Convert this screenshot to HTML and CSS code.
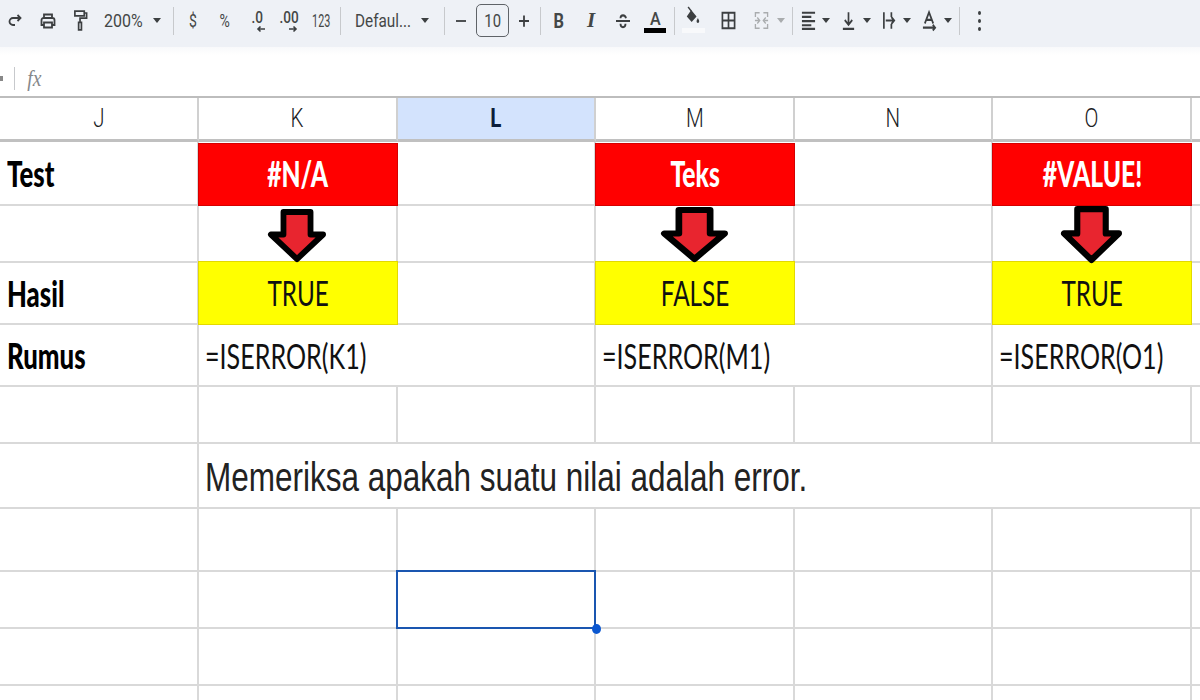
FILE: index.html
```html
<!DOCTYPE html>
<html lang="id">
<head>
<meta charset="utf-8">
<title>ISERROR</title>
<link rel="stylesheet" href="styles.css">
</head>
<body>
<div class="toolbar">
  <div class="tool w-redo"><svg class="ico" viewBox="0 0 16 16"><path d="M13 5H6a3.500 3.500 0 0 0 0 7h2M10.500 2 13.500 5 10.500 8"/></svg></div>
  <div class="tool w-print"><svg class="ico" viewBox="0 0 16 16"><path d="M4 5V1.500h8V5M4 12H1.500V7A2 2 0 0 1 3.500 5h9a2 2 0 0 1 2 2v5H12M4 9.500h8v5H4z"/></svg></div>
  <div class="tool w-paint"><svg class="ico ico-tall" viewBox="0 0 16 24"><path d="M2 2h10v5H2zM12 4h2.500v5.500H7.500V14M6 14h3v8H6z"/></svg></div>
  <div class="zoomlevel">200%</div>
  <div class="caret-slot w-zoomcaret"><span class="caret"></span></div>
  <div class="sep s-a"></div>
  <div class="tool w32 txt"><span class="narrow">$</span></div>
  <div class="tool w32 txt"><span class="narrow">%</span></div>
  <div class="tool w32 dec">
    <span class="dec-t">.0</span>
    <svg class="dec-arrow" viewBox="0 0 10 8"><path d="M9 4H2M4.500 1.500 2 4l2.500 2.500"/></svg>
  </div>
  <div class="tool w32 dec">
    <span class="dec-t">.00</span>
    <svg class="dec-arrow" viewBox="0 0 10 8"><path d="M1 4h7M5.500 1.500 8 4 5.500 6.500"/></svg>
  </div>
  <div class="tool w32 txt"><span class="narrower">123</span></div>
  <div class="sep s-b"></div>
  <div class="fontname">Defaul...</div>
  <div class="caret-slot w-fontcaret"><span class="caret"></span></div>
  <div class="sep s-c"></div>
  <div class="tool w-minus"><svg class="ico" viewBox="0 0 16 16"><path d="M3 8h10"/></svg></div>
  <div class="sizebox"><span class="narrow">10</span></div>
  <div class="tool w-plus"><svg class="ico ico-st" viewBox="0 0 16 16" preserveAspectRatio="none"><path d="M3 8h10M8 3v10"/></svg></div>
  <div class="sep s-d"></div>
  <div class="tool w32 fmt bold"><span class="narrow">B</span></div>
  <div class="tool w32 fmt ital">I</div>
  <div class="tool w32"><svg class="ico ico-st" viewBox="0 0 16 16" preserveAspectRatio="none"><path d="M1 8h14M11 5.500C10.500 3.500 9.500 3 8 3S5.500 3.500 5.500 5.500M5.500 10.500C5.500 12.500 6.500 13.500 8 13.500s2.500-1 2.500-3"/></svg></div>
  <div class="tool w32 colora"><span class="colora-t">A</span><span class="colora-bar"></span></div>
  <div class="sep s-e"></div>
  <div class="tool w-fill"><svg class="ico fillicon" viewBox="0 0 18 20" preserveAspectRatio="none"><path class="solid" d="M7 4 2 10.500 7.500 16 13 10.500zM14.500 12c-1 1.700-1.500 2.600-1.500 3.300a1.500 1.700 0 0 0 3 0c0-.7-.5-1.600-1.500-3.300z"/><path class="handle-line" d="M3.500 1 7 5"/></svg><span class="fillbar"></span></div>
  <div class="tool w-border"><svg class="ico ico-st2" viewBox="0 0 16 16" preserveAspectRatio="none"><path d="M1.500 1.500h13v13h-13zM8 1.500v13M1.500 8h13"/></svg></div>
  <div class="tool w-merge"><svg class="ico ico-st2 dim dash" viewBox="0 0 16 16" preserveAspectRatio="none"><path d="M1.500 5V1.500H6M10 1.500h4.500V5M1.500 11v3.500H6M10 14.500h4.500V11M1 8h4M15 8h-4M3.500 5.500 6 8 3.500 10.500M12.500 5.500 10 8l2.500 2.500"/></svg></div>
  <div class="caret-slot w-mergecaret"><span class="caret dimcaret"></span></div>
  <div class="sep s-f"></div>
  <div class="tool w-t t-first"><svg class="ico ico-st2" viewBox="0 0 16 16" preserveAspectRatio="none"><path d="M1 1.500h14M1 5h10M1 8.500h14M1 12h10M1 15h14"/></svg></div>
  <div class="caret-slot w-c"><span class="caret"></span></div>
  <div class="tool w-t"><svg class="ico ico-st2" viewBox="0 0 16 16" preserveAspectRatio="none"><path d="M8 1v10M4 7.500 8 11.500l4-4M2 15h12"/></svg></div>
  <div class="caret-slot w-c"><span class="caret"></span></div>
  <div class="tool w-t"><svg class="ico ico-st2" viewBox="0 0 16 16" preserveAspectRatio="none"><path d="M2 1v14M10 1v4M10 11v4M4 8h9M10 5l3 3-3 3"/></svg></div>
  <div class="caret-slot w-c"><span class="caret"></span></div>
  <div class="tool w-t"><svg class="ico ico-st2" viewBox="0 0 16 16" preserveAspectRatio="none"><path d="M3 10.500 7.500 1 12 10.500M4.500 7.500h6M1 14h13M11.500 11.500 14 14l-2.500 2.500"/></svg></div>
  <div class="caret-slot w-c"><span class="caret"></span></div>
  <div class="sep s-g"></div>
  <div class="dots"><i></i><i></i><i></i></div>
</div>
<div class="formulabar">
  <span class="namecaret"></span>
  <span class="fsep"></span>
  <span class="fx">fx</span>
</div>
<div class="sheet">
  <div class="head"><span class="head-t">J</span></div><div class="head"><span class="head-t">K</span></div><div class="head head-sel"><span class="head-t">L</span></div><div class="head"><span class="head-t">M</span></div><div class="head"><span class="head-t">N</span></div><div class="head"><span class="head-t">O</span></div><div class="head end"></div>

  <div class="c r1 label"><span class="t-label">Test</span></div><div class="c r1 red"><span class="t-red">#N/A</span></div><div class="c r1"></div><div class="c r1 red"><span class="t-red">Teks</span></div><div class="c r1"></div><div class="c r1 red"><span class="t-red">#VALUE!</span></div><div class="c r1 end"></div>

  <div class="c r2"></div>
  <div class="c r2 center"><svg class="arrow a-k" viewBox="0 0 60 54" preserveAspectRatio="none"><path d="M16 3H44V26H57L30 51 3 26H16Z"/></svg></div>
  <div class="c r2"></div>
  <div class="c r2 center"><svg class="arrow a-m" viewBox="0 0 60 54" preserveAspectRatio="none"><path d="M16 3H44V26H57L30 51 3 26H16Z"/></svg></div>
  <div class="c r2"></div>
  <div class="c r2 center"><svg class="arrow a-o" viewBox="0 0 60 54" preserveAspectRatio="none"><path d="M16 3H44V26H57L30 51 3 26H16Z"/></svg></div>
  <div class="c r2 end"></div>

  <div class="c r3 label"><span class="t-label">Hasil</span></div><div class="c r3 yellow"><span class="t-body">TRUE</span></div><div class="c r3"></div><div class="c r3 yellow"><span class="t-body">FALSE</span></div><div class="c r3"></div><div class="c r3 yellow"><span class="t-body">TRUE</span></div><div class="c r3 end"></div>

  <div class="c r4 label"><span class="t-label">Rumus</span></div><div class="c r4 span2 formula"><span class="t-body">=ISERROR(K1)</span></div><div class="c r4 span2 formula"><span class="t-body">=ISERROR(M1)</span></div><div class="c r4 span2 formula end"><span class="t-body">=ISERROR(O1)</span></div>

  <div class="c r5"></div><div class="c r5"></div><div class="c r5"></div><div class="c r5"></div><div class="c r5"></div><div class="c r5"></div><div class="c r5 end"></div>

  <div class="c r6"></div><div class="c r6 spanall note"><span class="t-note">Memeriksa apakah suatu nilai adalah error.</span></div>

  <div class="c r7"></div><div class="c r7"></div><div class="c r7"></div><div class="c r7"></div><div class="c r7"></div><div class="c r7"></div><div class="c r7 end"></div>

  <div class="c r8"></div><div class="c r8"></div><div class="c r8 selected"><span class="selbox"></span><span class="handle"></span></div><div class="c r8"></div><div class="c r8"></div><div class="c r8"></div><div class="c r8 end"></div>

  <div class="c r9"></div><div class="c r9"></div><div class="c r9"></div><div class="c r9"></div><div class="c r9"></div><div class="c r9"></div><div class="c r9 end"></div>

  <div class="c r10"></div><div class="c r10"></div><div class="c r10"></div><div class="c r10"></div><div class="c r10"></div><div class="c r10"></div><div class="c r10 end"></div>
</div>
</body>
</html>
```
FILE: styles.css
```css
* { box-sizing: border-box; }
html, body { margin: 0; padding: 0; }
body { width: 1200px; height: 700px; overflow: hidden; background: #fff; font-family: "Roboto", "Liberation Sans", sans-serif; color: #444746; }

/* toolbar */
.toolbar { height: 47px; background: #eef1f6; display: flex; align-items: center; padding-bottom: 6px; }
.tool { height: 32px; flex: none; display: flex; align-items: center; justify-content: center; position: relative; }
.ico { width: 16px; height: 16px; fill: none; stroke: #3c3f41; stroke-width: 1.8; overflow: visible; flex: none; }
.ico-tall { width: 15px; height: 23px; }
.ico-st { height: 18px; }
.ico-st2 { width: 15px; height: 19px; }
.dim { stroke: #a9acae; }
.dash { stroke-width: 1.4; }
.narrow { display: inline-block; transform: scaleX(.78); }
.narrower { display: inline-block; transform: scaleX(.6); }
.w-redo { width: 30px; }
.w-print { width: 36px; }
.w-paint { width: 28px; }
.w32 { width: 32px; }
.zoomlevel { width: 54px; flex: none; padding-left: 10px; font-size: 19px; transform: scaleX(.84); transform-origin: 10px 50%; }
.caret-slot { flex: none; height: 32px; display: flex; align-items: center; justify-content: center; }
.caret { flex: none; width: 0; height: 0; border-left: 4.5px solid transparent; border-right: 4.5px solid transparent; border-top: 5px solid #3c3f41; }
.dimcaret { border-top-color: #a9acae; }
.w-zoomcaret { width: 18px; }
.sep { flex: none; width: 1px; height: 28px; background: #c7c9cc; }
.s-a { margin: 0 3px 0 7px; }
.s-b { margin: 0 0 0 3px; }
.s-c { margin: 0 0 0 3px; }
.s-d { margin: 0 2px 0 2px; }
.s-e { margin: 0 0 0 3px; }
.s-f { margin: 0 0 0 7px; }
.s-g { margin: 0 0 0 6px; }
.txt { font-size: 18px; }
.dec { flex-direction: column; align-items: center; justify-content: center; gap: 0; }
.dec-t { font-size: 17px; line-height: 16px; font-weight: 500; transform: scaleX(.8); }
.dec-arrow { width: 10px; height: 8px; fill: none; stroke: #3c3f41; stroke-width: 1.6; margin-left: 8px; }
.fontname { width: 70px; flex: none; padding-left: 14px; font-size: 18px; white-space: nowrap; transform: scaleX(.85); transform-origin: 14px 50%; }
.w-fontcaret { width: 33px; margin-left: -3px; }
.w-minus { width: 31px; }
.sizebox { width: 33px; height: 33px; flex: none; border: 1px solid #5f6368; border-radius: 5px; display: flex; align-items: center; justify-content: center; font-size: 19px; }
.w-plus { width: 29px; }
.fmt { font-size: 21px; }
.bold { font-weight: 700; }
.ital { font-style: italic; font-weight: 700; font-family: "Liberation Serif", serif; }
.colora { flex-direction: column; }
.colora-t { font-size: 19px; line-height: 19px; font-weight: 500; transform: scaleX(.85); }
.colora-bar { width: 22px; height: 5px; background: #000; }
.w-fill { width: 36px; flex-direction: column; }
.fillicon { width: 16px; height: 20px; margin-top: -2px; }
.solid { fill: #3c3f41; stroke: none; }
.handle-line { stroke-width: 1.6; }
.fillbar { width: 23px; height: 5px; background: #f8f9fb; margin-top: 2px; }
.w-border { width: 34px; }
.w-merge { width: 32px; }
.w-mergecaret { width: 8px; }
.w-t { width: 26px; margin-left: 4.5px; }
.t-first { margin-left: 2px; }
.w-c { width: 10px; }
.dots { flex: none; width: 6px; margin-left: 17px; display: flex; flex-direction: column; gap: 4px; align-items: center; }
.dots i { width: 3px; height: 4px; border-radius: 50%; background: #3c3f41; }

/* formula bar */
.formulabar { height: 49px; background: linear-gradient(#f8f9fb, #fff 8px); display: flex; align-items: center; position: relative; padding-top: 14px; }
.namecaret { width: 3px; height: 5px; background: #888; }
.fsep { width: 1px; height: 23px; background: #c7c9cc; margin-left: 11px; }
.fx { font-family: "Liberation Serif", serif; font-style: italic; color: #85878a; font-size: 23px; margin-left: 11px; transform: scaleX(.85); }

/* sheet */
.sheet { border-top: 2px solid #bdbdbd; display: grid; grid-template-columns: 199px repeat(5, 198.6px) 8px; grid-template-rows: 44px 64px 57px 62px 62px 57px 65px 63px 57px 57px 14px; }
.c { border-right: 2px solid #d9d9d9; border-bottom: 2px solid #d9d9d9; display: flex; align-items: center; min-width: 0; position: relative; }
.r10 { border-bottom: 0; }
.head { border-right: 2px solid #d0d0d0; border-bottom: 3px solid #c0c0c0; display: flex; align-items: center; justify-content: center; font-size: 25px; color: #202124; font-weight: 300; }
.head-t { display: inline-block; transform: scaleX(.82); }
.head-sel { background: #d3e3fd; font-weight: 700; color: #0b1d3a; }
.end { border-right: 0; }
.span2 { grid-column: span 2; }
.spanall { grid-column: span 6; border-right: 0; }
.label { padding-left: 7px; }
.t-label { display: inline-block; font-family: "Lato", "Liberation Sans", sans-serif; font-weight: 900; font-size: 28px; color: #000; transform: scale(.92, 1.27); transform-origin: 0 50%; }
.red { background: #f00; border: 1px solid #d50000; justify-content: center; margin: 1px 0 0 -1px; padding-bottom: 3px; }
.t-red { display: inline-block; font-family: "Lato", "Liberation Sans", sans-serif; font-weight: 900; font-size: 28px; color: #fff; transform: scale(.88, 1.27); }
.yellow { background: #ff0; border: 1px solid #e3d900; justify-content: center; margin: -2px 0 0 -1px; padding-bottom: 2px; }
.t-body { display: inline-block; font-family: "Lato", "Liberation Sans", sans-serif; font-weight: 400; font-size: 27px; color: #111; transform: scale(.9, 1.27); }
.formula { padding-left: 6px; }
.formula .t-body { transform: scale(.93, 1.27); transform-origin: 0 50%; }
.center { justify-content: center; }
.arrow { flex: none; z-index: 2; overflow: visible; fill: #e8252f; stroke: #000; stroke-width: 6; stroke-linejoin: round; }
.a-k { width: 58px; height: 53px; margin-top: 3px; }
.a-m { width: 67px; height: 55px; margin-top: 1px; }
.a-o { width: 61px; height: 57px; margin-top: 1px; }
.note { padding-left: 6px; }
.t-note { display: inline-block; font-family: "Liberation Sans", Arial, sans-serif; font-size: 36px; color: #222; white-space: nowrap; transform: scale(.875, 1.12); transform-origin: 0 50%; margin-top: 4px; }
.selbox { position: absolute; left: -2px; top: -2px; right: -2px; bottom: -2px; border: 2px solid #1a56b0; z-index: 3; }
.handle { position: absolute; right: -7px; bottom: -7px; width: 9px; height: 10px; border-radius: 50%; background: #0b57d0; z-index: 4; }
```
